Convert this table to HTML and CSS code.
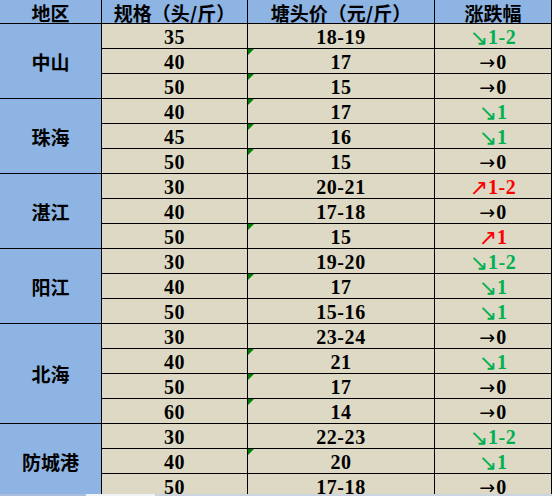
FILE: index.html
```html
<!DOCTYPE html>
<html lang="zh">
<head>
<meta charset="utf-8">
<link rel="stylesheet" href="styles.css">
</head>
<body>
<div class="sheet">
  <div class="c h">地区</div>
  <div class="c h">规格（头/斤）</div>
  <div class="c h">塘头价（元/斤）</div>
  <div class="c h">涨跌幅</div>

  <div class="c region r3">中山</div>
  <div class="c n">35</div><div class="c n">18-19</div><div class="c n down"><span class="ar dg">↘</span>1-2</div>
  <div class="c n">40</div><div class="c n tri">17</div><div class="c n"><span class="ar">→</span>0</div>
  <div class="c n">50</div><div class="c n tri">15</div><div class="c n"><span class="ar">→</span>0</div>

  <div class="c region r3">珠海</div>
  <div class="c n">40</div><div class="c n tri">17</div><div class="c n down"><span class="ar dg">↘</span>1</div>
  <div class="c n">45</div><div class="c n tri">16</div><div class="c n down"><span class="ar dg">↘</span>1</div>
  <div class="c n">50</div><div class="c n tri">15</div><div class="c n"><span class="ar">→</span>0</div>

  <div class="c region r3">湛江</div>
  <div class="c n">30</div><div class="c n">20-21</div><div class="c n up"><span class="ar dg">↗</span>1-2</div>
  <div class="c n">40</div><div class="c n">17-18</div><div class="c n"><span class="ar">→</span>0</div>
  <div class="c n">50</div><div class="c n tri">15</div><div class="c n up"><span class="ar dg">↗</span>1</div>

  <div class="c region r3">阳江</div>
  <div class="c n">30</div><div class="c n">19-20</div><div class="c n down"><span class="ar dg">↘</span>1-2</div>
  <div class="c n">40</div><div class="c n tri">17</div><div class="c n down"><span class="ar dg">↘</span>1</div>
  <div class="c n">50</div><div class="c n">15-16</div><div class="c n down"><span class="ar dg">↘</span>1</div>

  <div class="c region r4">北海</div>
  <div class="c n">30</div><div class="c n">23-24</div><div class="c n"><span class="ar">→</span>0</div>
  <div class="c n">40</div><div class="c n tri">21</div><div class="c n down"><span class="ar dg">↘</span>1</div>
  <div class="c n">50</div><div class="c n tri">17</div><div class="c n"><span class="ar">→</span>0</div>
  <div class="c n">60</div><div class="c n tri">14</div><div class="c n"><span class="ar">→</span>0</div>

  <div class="c region r3">防城港</div>
  <div class="c n">30</div><div class="c n">22-23</div><div class="c n down"><span class="ar dg">↘</span>1-2</div>
  <div class="c n">40</div><div class="c n tri">20</div><div class="c n down"><span class="ar dg">↘</span>1</div>
  <div class="c n">50</div><div class="c n">17-18</div><div class="c n"><span class="ar">→</span>0</div>
</div>
<div class="scrollbar"><span class="s1"></span><span class="s2"></span><span class="s3"></span></div>
</body>
</html>
```
FILE: styles.css
```css
html, body {
  margin: 0;
  padding: 0;
  width: 552px;
  height: 496px;
  overflow: hidden;
  background: #ffffff;
}
body { position: relative; }

.sheet {
  display: grid;
  grid-template-columns: 102px 146px 187px 117px;
  grid-auto-rows: 25px;
  grid-template-rows: 24px;
  width: 552px;
}

.c {
  box-sizing: border-box;
  border-right: 1px solid #000;
  border-bottom: 1px solid #000;
  display: flex;
  align-items: center;
  justify-content: center;
  white-space: nowrap;
  position: relative;
}

.h {
  background: #8db4e2;
  font-family: "Noto Sans CJK SC", sans-serif;
  font-weight: 700;
  font-size: 19px;
  color: #000;
  padding-top: 1px;
}

.region {
  background: #8db4e2;
  font-family: "Noto Sans CJK SC", sans-serif;
  font-weight: 700;
  font-size: 19px;
  color: #000;
}
.r3 { grid-row: span 3; }
.r4 { grid-row: span 4; }

.n {
  background: #ddd9c4;
  font-family: "Liberation Serif", "Noto Sans CJK SC", serif;
  font-weight: 700;
  font-size: 20px;
  letter-spacing: 0.6px;
  color: #000;
  padding-top: 2px;
}

.ar {
  font-family: "DejaVu Sans", sans-serif;
  font-weight: 400;
  font-size: 19px;
  letter-spacing: 0;
  margin-right: 1px;
}
.ar.dg {
  font-size: 22px;
  margin-right: 0;
}

.down { color: #00b050; }
.up { color: #ff0000; }

.tri::before {
  content: "";
  position: absolute;
  left: 0;
  top: 0;
  border-top: 6px solid #008000;
  border-right: 6px solid transparent;
}

.scrollbar {
  position: absolute;
  left: 0;
  bottom: 0;
  width: 552px;
  height: 2px;
  display: flex;
}
.s1 { width: 86px; background: #a9bfdd; }
.s2 { width: 69px; background: #f2f4f7; }
.s3 { flex: 1; background: #ccd5e2; }
```
